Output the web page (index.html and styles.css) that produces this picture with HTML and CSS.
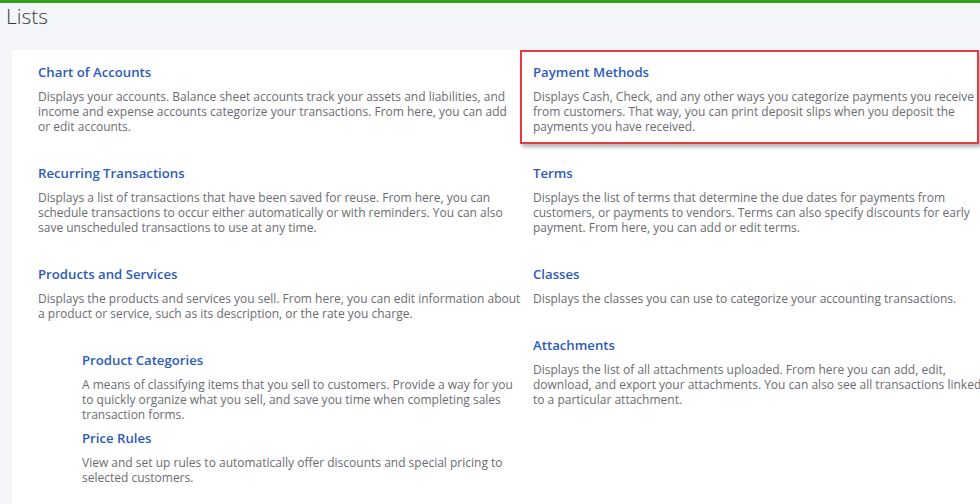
FILE: index.html
```html
<!DOCTYPE html>
<html lang="en">
<head>
<meta charset="utf-8">
<title>Lists</title>
<link rel="stylesheet" href="styles.css">
</head>
<body>
<div class="topbar"></div>
<h1 class="page-title">Lists</h1>
<main class="panel">
  <div class="col col-left">
    <section class="item">
      <h2 class="item-title">Chart of Accounts</h2>
      <p class="item-desc">Displays your accounts. Balance sheet accounts track your assets and liabilities, and income and expense accounts categorize your transactions. From here, you can add or edit accounts.</p>
    </section>
    <section class="item">
      <h2 class="item-title">Recurring Transactions</h2>
      <p class="item-desc">Displays a list of transactions that have been saved for reuse. From here, you can schedule transactions to occur either automatically or with reminders. You can also save unscheduled transactions to use at any time.</p>
    </section>
    <section class="item">
      <h2 class="item-title">Products and Services</h2>
      <p class="item-desc">Displays the products and services you sell. From here, you can edit information about a product or service, such as its description, or the rate you charge.</p>
    </section>
    <div class="sublist">
      <section class="subitem">
        <h2 class="item-title">Product Categories</h2>
        <p class="item-desc">A means of classifying items that you sell to customers. Provide a way for you to quickly organize what you sell, and save you time when completing sales transaction forms.</p>
      </section>
      <section class="subitem">
        <h2 class="item-title">Price Rules</h2>
        <p class="item-desc">View and set up rules to automatically offer discounts and special pricing to selected customers.</p>
      </section>
    </div>
  </div>
  <div class="col col-right">
    <section class="item item-highlight">
      <h2 class="item-title">Payment Methods</h2>
      <p class="item-desc">Displays Cash, Check, and any other ways you categorize payments you receive from customers. That way, you can print deposit slips when you deposit the payments you have received.</p>
    </section>
    <section class="item">
      <h2 class="item-title">Terms</h2>
      <p class="item-desc">Displays the list of terms that determine the due dates for payments from customers, or payments to vendors. Terms can also specify discounts for early payment. From here, you can add or edit terms.</p>
    </section>
    <section class="item">
      <h2 class="item-title">Classes</h2>
      <p class="item-desc">Displays the classes you can use to categorize your accounting transactions.</p>
    </section>
    <section class="item">
      <h2 class="item-title">Attachments</h2>
      <p class="item-desc">Displays the list of all attachments uploaded. From here you can add, edit, download, and export your attachments. You can also see all transactions linked to a particular attachment.</p>
    </section>
  </div>
</main>
</body>
</html>
```

FILE: styles.css
```css
html, body {
  margin: 0;
  padding: 0;
  overflow: hidden;
  height: 100%;
}

body {
  background: #f4f5f8;
  font-family: "Open Sans", Lato, Arial, sans-serif;
  color: #393a3d;
}

.topbar {
  height: 3px;
  background: #2ca01c;
}

.page-title {
  margin: 0 0 0 6px;
  font-size: 21px;
  font-weight: 300;
  line-height: 26px;
  color: #393a3d;
}

.panel {
  margin: 21px 0 0 12px;
  background: #ffffff;
  display: flex;
  padding-left: 12px;
  min-height: 500px;
}

.col {
  display: flex;
  flex-direction: column;
}

.col-left {
  width: 496px;
  flex: none;
}

.col-right {
  width: 459px;
  flex: none;
}

.item {
  border: 2px solid transparent;
  padding: 10px 0 8px 12px;
  margin-bottom: 7px;
}

.col-left .item-desc {
  margin-right: -3px;
}

.col-right .item {
  padding-left: 11px;
}

.col-right .item-desc {
  margin-right: -8px;
}

.item-highlight {
  border-color: #e53a3f;
  box-shadow: 2px 3px 4px rgba(0, 0, 0, 0.3);
}

.item-title {
  margin: 0;
  font-size: 13.2px;
  font-weight: 600;
  line-height: 20px;
  color: #2d5bb9;
}

.item-desc {
  margin: 7px 0 0;
  font-size: 12px;
  line-height: 15px;
  color: #6b6c72;
}

.sublist {
  margin-left: 58px;
  padding-top: 12px;
  padding-right: 6px;
  display: flex;
  flex-direction: column;
  gap: 6px;
}

.subitem {
  padding: 0;
}
```
